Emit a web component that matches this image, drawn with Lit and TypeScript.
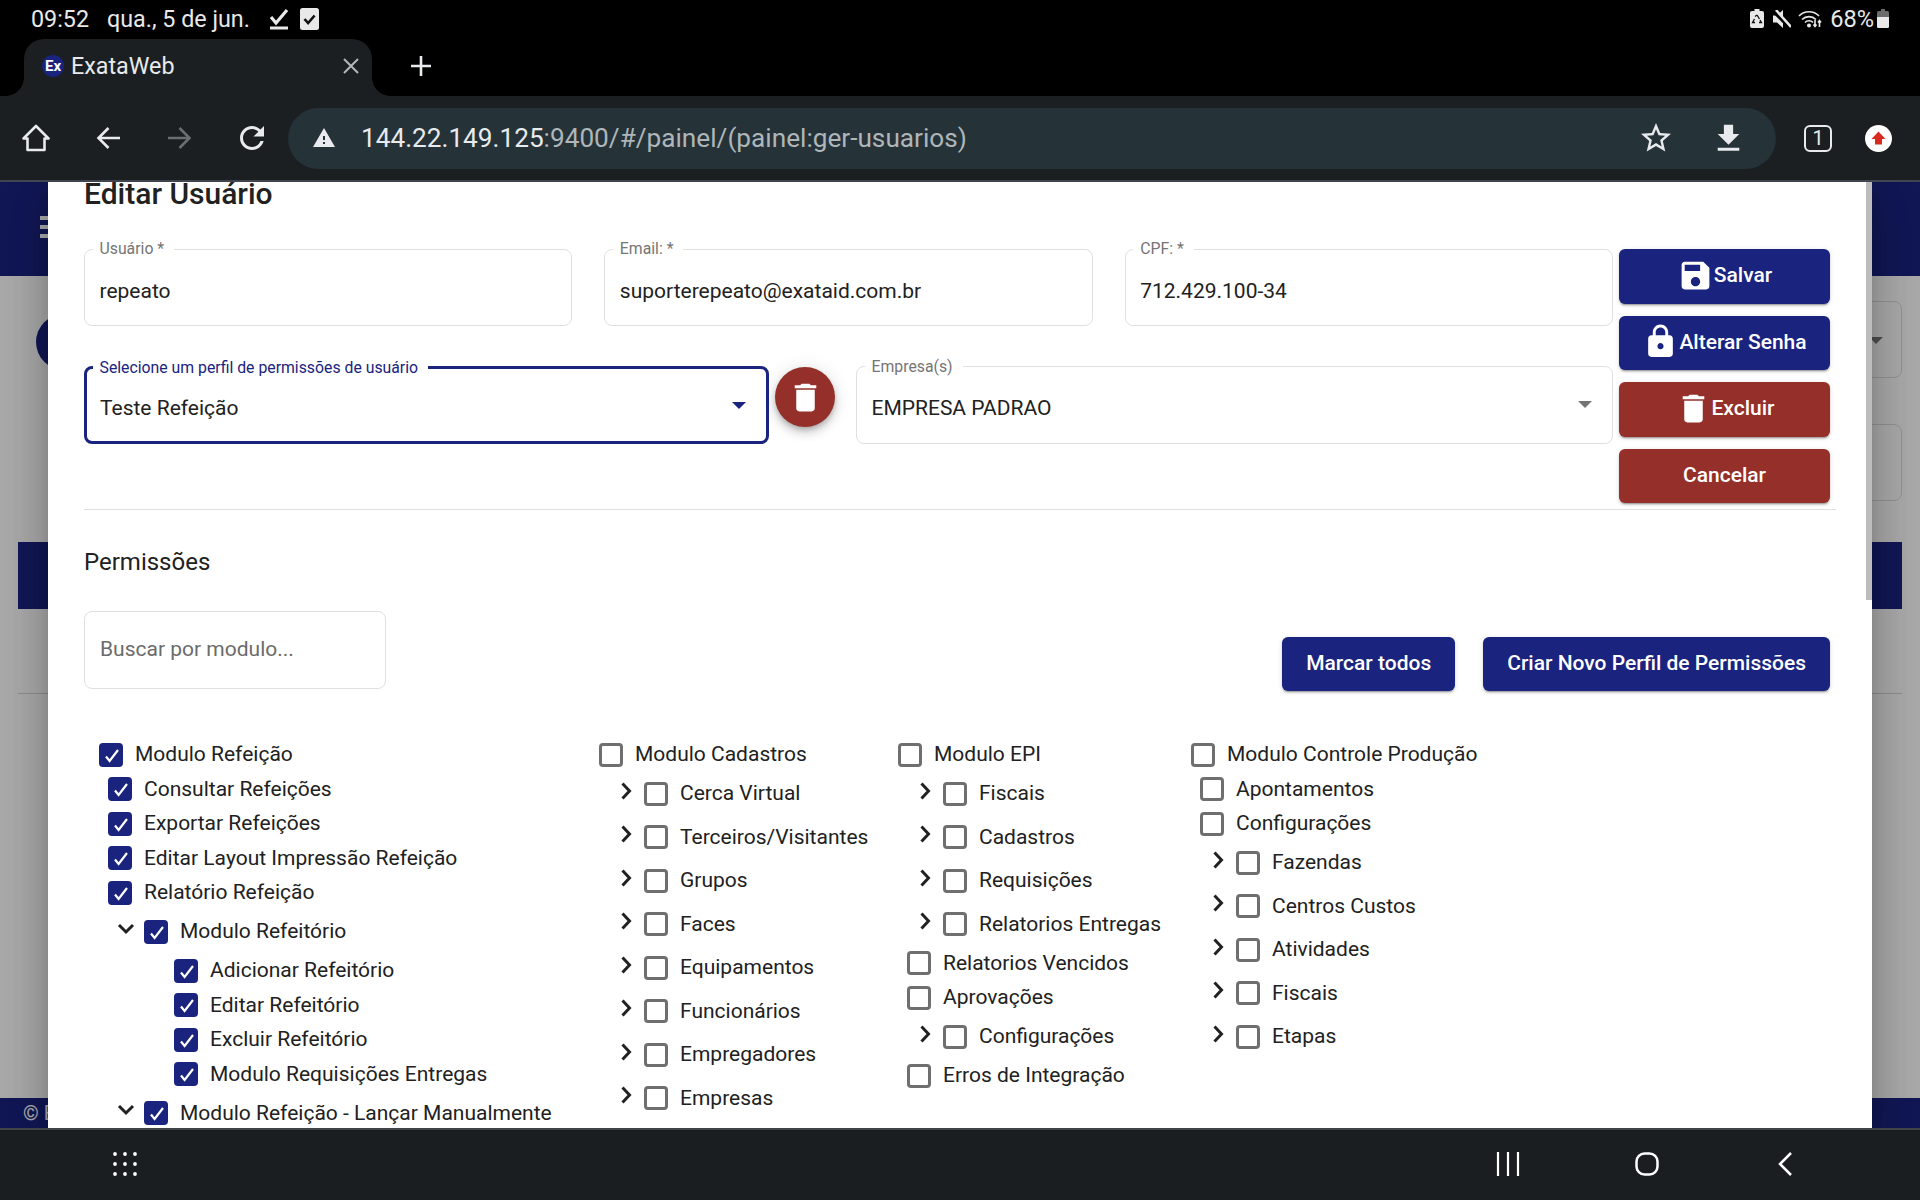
import { LitElement, html, css, svg, nothing } from 'lit';
import { customElement } from 'lit/decorators.js';

type Kind = 'root' | 'leaf' | 'exp' | 'open' | 'child';
type Item = [Kind, string];

const COLUMNS: { on: boolean; items: Item[] }[] = [
  {
    on: true,
    items: [
      ['root', 'Modulo Refeição'],
      ['leaf', 'Consultar Refeições'],
      ['leaf', 'Exportar Refeições'],
      ['leaf', 'Editar Layout Impressão Refeição'],
      ['leaf', 'Relatório Refeição'],
      ['open', 'Modulo Refeitório'],
      ['child', 'Adicionar Refeitório'],
      ['child', 'Editar Refeitório'],
      ['child', 'Excluir Refeitório'],
      ['child', 'Modulo Requisições Entregas'],
      ['open', 'Modulo Refeição - Lançar Manualmente'],
    ],
  },
  {
    on: false,
    items: [
      ['root', 'Modulo Cadastros'],
      ['exp', 'Cerca Virtual'],
      ['exp', 'Terceiros/Visitantes'],
      ['exp', 'Grupos'],
      ['exp', 'Faces'],
      ['exp', 'Equipamentos'],
      ['exp', 'Funcionários'],
      ['exp', 'Empregadores'],
      ['exp', 'Empresas'],
    ],
  },
  {
    on: false,
    items: [
      ['root', 'Modulo EPI'],
      ['exp', 'Fiscais'],
      ['exp', 'Cadastros'],
      ['exp', 'Requisições'],
      ['exp', 'Relatorios Entregas'],
      ['leaf', 'Relatorios Vencidos'],
      ['leaf', 'Aprovações'],
      ['exp', 'Configurações'],
      ['leaf', 'Erros de Integração'],
    ],
  },
  {
    on: false,
    items: [
      ['root', 'Modulo Controle Produção'],
      ['leaf', 'Apontamentos'],
      ['leaf', 'Configurações'],
      ['exp', 'Fazendas'],
      ['exp', 'Centros Custos'],
      ['exp', 'Atividades'],
      ['exp', 'Fiscais'],
      ['exp', 'Etapas'],
    ],
  },
];

const icon = (d: string, cls = 'mi') =>
  html`<svg class=${cls} viewBox="0 0 24 24" fill="currentColor"><path d=${d}></path></svg>`;

const SAVE = 'M17 3H5c-1.11 0-2 .9-2 2v14c0 1.1.89 2 2 2h14c1.1 0 2-.9 2-2V7l-4-4zm-5 16c-1.66 0-3-1.34-3-3s1.34-3 3-3 3 1.34 3 3-1.34 3-3 3zm3-10H5V5h10v4z';
const LOCK = 'M18 8h-1V6c0-2.76-2.24-5-5-5S7 3.24 7 6v2H6c-1.1 0-2 .9-2 2v10c0 1.1.9 2 2 2h12c1.1 0 2-.9 2-2V10c0-1.1-.9-2-2-2zm-6 9c-1.1 0-2-.9-2-2s.9-2 2-2 2 .9 2 2-.9 2-2 2zm3.1-9H8.9V6c0-1.71 1.39-3.1 3.1-3.1 1.71 0 3.1 1.39 3.1 3.1v2z';
const TRASH = 'M6 19c0 1.1.9 2 2 2h8c1.1 0 2-.9 2-2V7H6v12zM19 4h-3.5l-1-1h-5l-1 1H5v2h14V4z';
const STAR = 'M22 9.24l-7.19-.62L12 2 9.19 8.63 2 9.24l5.46 4.73L5.82 21 12 17.27 18.18 21l-1.63-7.03L22 9.24zM12 15.4l-3.76 2.27 1-4.28-3.32-2.88 4.38-.38L12 6.1l1.71 4.04 4.38.38-3.32 2.88 1 4.28L12 15.4z';
const DOWNLOAD = 'M19 9h-4V3H9v6H5l7 7 7-7zM5 18v2h14v-2H5z';
const RELOAD = 'M17.65 6.35C16.2 4.9 14.21 4 12 4c-4.42 0-7.99 3.58-7.99 8s3.57 8 7.99 8c3.73 0 6.84-2.55 7.73-6h-2.08c-.82 2.33-3.04 4-5.65 4-3.31 0-6-2.69-6-6s2.69-6 6-6c1.66 0 3.14.69 4.22 1.78L13 11h7V4l-2.35 2.35z';
const WARN = 'M1 21h22L12 2 1 21zm12-3h-2v-2h2v2zm0-4h-2v-4h2v4z';

@customElement('perm-tree')
export class PermTree extends LitElement {
  static styles = css`
    :host {
      display: grid;
      grid-template-columns: 500px 299px 293px 1fr;
      padding-left: 15px;
      margin-top: 46.25px;
      font-family: Roboto, sans-serif;
      font-size: 21px;
      color: #212121;
    }
    .row {
      display: flex;
      align-items: center;
      height: 34.5px;
      white-space: nowrap;
    }
    .row.tall {
      height: 43.5px;
    }
    .leaf {
      padding-left: 9px;
    }
    .child {
      padding-left: 75px;
    }
    .chev {
      width: 18px;
      height: 18px;
      margin: -6px 9px 0 18px;
      fill: none;
      stroke: #212121;
      stroke-width: 3;
      flex: none;
    }
    .cb {
      width: 24px;
      height: 24px;
      box-sizing: border-box;
      border: 3px solid #6f6f6f;
      border-radius: 4px;
      margin-right: 12px;
      flex: none;
    }
    .cb.on {
      background: #1a237e;
      border: none;
    }
    .cb svg {
      display: block;
      fill: none;
      stroke: #fff;
      stroke-width: 2.2;
    }
    .txt {
      margin-top: -1px;
    }
  `;

  private box(on: boolean) {
    return on
      ? html`<div class="cb on"><svg width="24" height="24" viewBox="0 0 24 24"><path d="M7 13.5l3.6 4.5L19 7"></path></svg></div>`
      : html`<div class="cb"></div>`;
  }

  private row(on: boolean, [kind, label]: Item) {
    const tall = kind === 'exp' || kind === 'open';
    return html`<div class="row ${kind} ${tall ? 'tall' : ''}">
      ${tall
        ? html`<svg class="chev" viewBox="0 0 18 18">
            ${kind === 'open'
              ? svg`<path d="M2 5l7 7 7-7"></path>`
              : svg`<path d="M5.5 1.5L12.5 9l-7 7.5"></path>`}
          </svg>`
        : nothing}
      ${this.box(on)}
      <span class="txt">${label}</span>
    </div>`;
  }

  render() {
    return COLUMNS.map((c) => html`<div>${c.items.map((i) => this.row(c.on, i))}</div>`);
  }
}

@customElement('app-root')
export class AppRoot extends LitElement {
  static styles = css`
    :host {
      display: flex;
      flex-direction: column;
      width: 1920px;
      height: 1200px;
      overflow: hidden;
      font-family: Roboto, sans-serif;
      background: #000;
    }
    /* status bar */
    .status {
      height: 39px;
      box-sizing: border-box;
      padding: 0 31px 2px;
      display: flex;
      align-items: center;
      color: #e9e9e9;
      font-size: 23.3px;
      flex: none;
    }
    .status .date {
      margin-left: 18px;
    }
    .status .s1 {
      margin-left: 19px;
    }
    .status .s2 {
      margin-left: 11px;
    }
    .status .spacer {
      flex: 1;
    }
    .status .pct {
      margin: 0 3px 0 8px;
      font-size: 23.6px;
    }
    .status .mute {
      margin-left: 9px;
    }
    .status .wifi {
      margin-left: 7px;
    }
    .status svg {
      display: block;
      flex: none;
    }
    /* tabs */
    .tabs {
      height: 57px;
      display: flex;
      align-items: center;
      padding-left: 24px;
      flex: none;
    }
    .tab {
      position: relative;
      width: 348px;
      height: 57px;
      box-sizing: border-box;
      background: #1b1f22;
      border-radius: 20px 20px 0 0;
      display: flex;
      align-items: center;
      padding: 0 13px 4px 18px;
      color: #e8eaed;
      font-size: 23.3px;
    }
    .tab::before,
    .tab::after {
      content: '';
      position: absolute;
      bottom: 0;
      width: 18px;
      height: 18px;
    }
    .tab::before {
      left: -18px;
      background: radial-gradient(circle at 0 0, transparent 17.5px, #1b1f22 18px);
    }
    .tab::after {
      right: -18px;
      background: radial-gradient(circle at 100% 0, transparent 17.5px, #1b1f22 18px);
    }
    .fav {
      width: 22px;
      height: 22px;
      border-radius: 50%;
      background: #1a237e;
      color: #fff;
      font-size: 15px;
      font-weight: 700;
      display: flex;
      align-items: center;
      justify-content: center;
      margin-right: 7px;
      flex: none;
    }
    .tab .name {
      flex: 1;
    }
    .plus {
      margin: -4px 0 0 39px;
    }
    /* toolbar */
    .toolbar {
      height: 86px;
      box-sizing: border-box;
      border-bottom: 2px solid #41454f;
      background: #1b1f22;
      display: flex;
      align-items: center;
      color: #e8eaed;
      flex: none;
    }
    .toolbar svg {
      display: block;
      flex: none;
    }
    .home {
      margin-left: 22px;
    }
    .back {
      margin-left: 46px;
    }
    .fwd {
      margin-left: 48px;
      color: #6a6e70;
    }
    .reload {
      margin-left: 42px;
    }
    .url {
      margin-left: 18px;
      width: 1488px;
      height: 61px;
      border-radius: 31px;
      background: #253238;
      display: flex;
      align-items: center;
      padding-left: 24px;
      box-sizing: border-box;
      font-size: 26.2px;
      color: #aeb6ba;
    }
    .url .host {
      color: #e8eaed;
    }
    .url .addr {
      margin-left: 25px;
      flex: 1;
    }
    .url .star {
      margin-right: 36px;
    }
    .url .dl {
      margin-right: 29px;
    }
    .count {
      margin-left: 28px;
      width: 28px;
      height: 27px;
      border: 2.5px solid #e8eaed;
      border-radius: 6px;
      box-sizing: border-box;
      font-size: 20px;
      display: flex;
      align-items: center;
      justify-content: center;
    }
    .avatar {
      margin-left: 33px;
    }
    /* page under the dialog */
    .view {
      flex: 1;
      position: relative;
      overflow: hidden;
      background: #fafafa;
      display: flex;
      flex-direction: column;
    }
    .topbar {
      height: 94px;
      background: #1a237e;
      padding-left: 40px;
      display: flex;
      align-items: center;
      flex: none;
    }
    .burger {
      width: 24px;
      height: 22px;
      margin-top: -4px;
      background: repeating-linear-gradient(#fff 0 4px, transparent 4px 9px);
    }
    .main {
      flex: 1;
      padding: 25px 18px 0;
    }
    .pagerow {
      display: flex;
      justify-content: space-between;
      align-items: center;
    }
    .round {
      width: 56px;
      height: 56px;
      border-radius: 50%;
      background: #1a237e;
      margin: 5px 0 0 18px;
    }
    .pagefield {
      width: 420px;
      height: 77px;
      box-sizing: border-box;
      border: 1px solid #d6d6d6;
      border-radius: 8px;
      position: relative;
    }
    .pagefield.second {
      margin: 46px 0 0 auto;
    }
    .pagefield i {
      position: absolute;
      right: 18px;
      top: 35px;
      border: 7px solid transparent;
      border-top-color: #757575;
      border-bottom: 0;
    }
    .band {
      height: 67px;
      margin-top: 41px;
      background: #1a237e;
    }
    .pageline {
      height: 1px;
      margin-top: 84px;
      background: #d0d0d0;
    }
    .footer {
      height: 30px;
      background: #1a237e;
      color: #fff;
      font-size: 20px;
      padding-left: 23px;
      display: flex;
      align-items: center;
      white-space: pre;
      flex: none;
    }
    .scrim {
      position: absolute;
      inset: 0;
      background: rgba(0, 0, 0, 0.32);
    }
    /* dialog */
    .dialog {
      position: absolute;
      left: 48px;
      right: 48px;
      top: 0;
      bottom: 0;
      background: #fff;
      overflow: hidden;
      box-sizing: border-box;
      padding: 0 36px;
      box-shadow: 0 11px 15px -7px rgba(0, 0, 0, 0.2), 0 24px 38px 3px rgba(0, 0, 0, 0.14),
        0 9px 46px 8px rgba(0, 0, 0, 0.12);
      color: #212121;
    }
    .thumb {
      position: absolute;
      right: 0;
      top: 0;
      width: 6px;
      height: 418px;
      background: #bdbdbd;
    }
    h2 {
      margin: 0 0 43px;
      font-size: 30px;
      line-height: 24px;
      font-weight: 500;
    }
    .form {
      display: grid;
      grid-template-columns: 1fr 211px;
      gap: 6px;
      padding-right: 6px;
    }
    .fields {
      display: flex;
      flex-direction: column;
      gap: 40px;
    }
    .line {
      display: flex;
      gap: 32px;
    }
    .field {
      position: relative;
      flex: 1;
      min-width: 0;
      height: 77px;
      box-sizing: border-box;
      border: 1.5px solid #e0e0e0;
      border-radius: 8px;
      display: flex;
      align-items: center;
      padding: 6px 14.5px 0;
      font-size: 21px;
    }
    .line.second .field {
      height: 78px;
    }
    .line.second .field label {
      top: -9px;
    }
    .field.focus {
      flex: none;
      width: 685px;
      border: 3px solid #1a237e;
      padding-left: 13px;
    }
    .field label {
      position: absolute;
      left: 7.5px;
      top: -10px;
      padding: 0 10px 0 7px;
      background: #fff;
      color: #757575;
      font-size: 15.8px;
      line-height: 18px;
      white-space: nowrap;
    }
    .line.second .field.focus label {
      left: 5.5px;
      top: -10.5px;
      color: #1a237e;
    }
    .field b {
      position: absolute;
      right: 20px;
      top: 34px;
      border: 7px solid transparent;
      border-top-color: #757575;
      border-bottom: 0;
    }
    .field.focus b {
      right: 20px;
      top: 33px;
      border-top-color: #1a237e;
    }
    .fab {
      width: 60px;
      height: 60px;
      margin: 1px -11px 0 -26px;
      border-radius: 50%;
      background: #952f2a;
      color: #fff;
      display: flex;
      align-items: center;
      justify-content: center;
      flex: none;
      box-shadow: 0 3px 5px -1px rgba(0, 0, 0, 0.2), 0 6px 10px 0 rgba(0, 0, 0, 0.14),
        0 1px 18px 0 rgba(0, 0, 0, 0.12);
    }
    .mi {
      width: 37px;
      height: 37px;
      flex: none;
    }
    .actions {
      display: flex;
      flex-direction: column;
      gap: 12px;
    }
    .btn {
      height: 54.5px;
      box-sizing: border-box;
      padding-bottom: 2px;
      border-radius: 6px;
      background: #1a237e;
      color: #fff;
      font-size: 21px;
      font-weight: 500;
      display: flex;
      align-items: center;
      justify-content: center;
      white-space: nowrap;
      box-shadow: 0 3px 1px -2px rgba(0, 0, 0, 0.2), 0 2px 2px 0 rgba(0, 0, 0, 0.14),
        0 1px 5px 0 rgba(0, 0, 0, 0.12);
    }
    .btn.red {
      background: #952f2a;
    }
    .btn.wide {
      padding: 0 24px 2px;
    }
    hr {
      border: 0;
      height: 1.5px;
      margin: 5.5px 0 0;
      background: #e0e0e0;
    }
    h3 {
      margin: 36.5px 0 0;
      font-size: 24px;
      line-height: 30px;
      font-weight: 400;
    }
    .tools {
      display: flex;
      align-items: flex-end;
      margin-top: 34.5px;
      padding-right: 6px;
      height: 80px;
      gap: 28px;
    }
    .search {
      flex: none;
      width: 302px;
      height: 78px;
      margin: 0 auto 2px 0;
      box-sizing: border-box;
      border: 1.5px solid #e0e0e0;
      border-radius: 8px;
      display: flex;
      align-items: center;
      padding: 0 15px 2px;
      font-size: 21px;
      color: #6b6b6b;
    }
    /* nav bar */
    .nav {
      height: 72px;
      background: #1a1e21;
      flex: none;
      display: flex;
      align-items: center;
      border-top: 2px solid #3f4449;
      box-sizing: border-box;
      padding-bottom: 2px;
      color: #fff;
    }
    .nav svg {
      display: block;
      flex: none;
    }
    .nav .apps {
      margin-left: 113px;
      margin-right: auto;
    }
    .nav .recents {
      margin-right: 115px;
    }
    .nav .homebtn {
      margin-right: 119px;
    }
    .nav .backbtn {
      margin-right: 128px;
    }
  `;

  private field(label: string, value: string, extra = '', arrow = false) {
    return html`<div class="field ${extra}">
      <label>${label}</label>${value}${arrow ? html`<b></b>` : nothing}
    </div>`;
  }

  render() {
    return html`
      <div class="status">
        <span>09:52</span><span class="date">qua., 5 de jun.</span>
        <svg class="s1" width="20" height="22" viewBox="0 0 20 22" fill="none" stroke="#e9e9e9">
          <path d="M2 9l5 6L18 2" stroke-width="3.2"></path>
          <path d="M1 20h18" stroke-width="3"></path>
        </svg>
        <svg class="s2" width="19" height="22" viewBox="0 0 19 22">
          <rect width="19" height="22" rx="2.5" fill="#e9e9e9"></rect>
          <path d="M4.5 11l3.6 4 6.5-7.5" fill="none" stroke="#111" stroke-width="2.6"></path>
        </svg>
        <div class="spacer"></div>
        <svg width="14" height="19" viewBox="0 0 14 19">
          <path d="M4.5 0h5v2H12a2 2 0 0 1 2 2v13a2 2 0 0 1-2 2H2a2 2 0 0 1-2-2V4a2 2 0 0 1 2-2h2.500z" fill="#e9e9e9"></path>
          <path d="M7 6l2.5 4M9 13.5h2.5L10 11M5 13.5H2.5L4.500 10M5 7.500L7 6" fill="none" stroke="#111" stroke-width="1.3"></path>
        </svg>
        <svg class="mute" width="18" height="18" viewBox="0 0 18 18" fill="#e9e9e9">
          <path d="M0 5.500h4L10 0v18l-6-5.500H0z"></path>
          <path d="M0 0l18 18" stroke="#000" stroke-width="4.500"></path>
          <path d="M3 0l15 17" stroke="#e9e9e9" stroke-width="2.500"></path>
        </svg>
        <svg class="wifi" width="24" height="18" viewBox="0 0 24 18" fill="none" stroke="#e9e9e9" stroke-width="1.600">
          <path d="M1 6a14 14 0 0 1 20 0"></path>
          <path d="M4 9.500a10 10 0 0 1 14 0"></path>
          <path d="M7 12.500a5.500 5.500 0 0 1 8 0"></path>
          <circle cx="11" cy="15.500" r="1.200" fill="#e9e9e9"></circle>
          <path d="M17 10v6M15.500 14.500l1.500 2 1.500-2M21.500 17v-6M20 12.500l1.500-2 1.500 2"></path>
        </svg>
        <span class="pct">68%</span>
        <svg width="12" height="19" viewBox="0 0 12 19">
          <path d="M4 0h4v2h2.500A1.500 1.500 0 0 1 12 3.500V8H0V3.500A1.500 1.500 0 0 1 1.500 2H4z" fill="#6b6b6b"></path>
          <path d="M0 8h12v9.500a1.500 1.500 0 0 1-1.500 1.500h-9A1.500 1.500 0 0 1 0 17.500z" fill="#e9e9e9"></path>
        </svg>
      </div>
      <div class="tabs">
        <div class="tab">
          <span class="fav">Ex</span>
          <span class="name">ExataWeb</span>
          <svg width="16" height="16" viewBox="0 0 16 16" stroke="#b4b6b8" stroke-width="2">
            <path d="M1 1l14 14M15 1L1 15"></path>
          </svg>
        </div>
        <svg class="plus" width="20" height="20" viewBox="0 0 20 20" stroke="#e8eaed" stroke-width="2.600">
          <path d="M10 0v20M0 10h20"></path>
        </svg>
      </div>
      <div class="toolbar">
        <svg class="home" width="28" height="28" viewBox="0 0 28 28" fill="none" stroke="currentColor" stroke-width="2.600" stroke-linejoin="round">
          <path d="M14 2L26.500 14.500H22.500V26H5.500V14.500H1.500z"></path>
        </svg>
        <svg class="back" width="24" height="24" viewBox="0 0 24 24" fill="none" stroke="currentColor" stroke-width="2.600">
          <path d="M24 12H3M12.500 2L2.500 12l10 10"></path>
        </svg>
        <svg class="fwd" width="24" height="24" viewBox="0 0 24 24" fill="none" stroke="currentColor" stroke-width="2.600">
          <path d="M0 12h21M11.500 2l10 10-10 10"></path>
        </svg>
        <svg class="reload" width="36" height="36" viewBox="0 0 24 24" fill="currentColor"><path d=${RELOAD}></path></svg>
        <div class="url">
          <svg width="24" height="24" viewBox="0 0 24 24" fill="#e8eaed"><path d=${WARN}></path></svg>
          <span class="addr"><span class="host">144.22.149.125</span>:9400/#/painel/(painel:ger-usuarios)</span>
          <svg class="star" width="36" height="36" viewBox="0 0 24 24" fill="#e8eaed"><path d=${STAR}></path></svg>
          <svg class="dl" width="37" height="37" viewBox="0 0 24 24" fill="#e8eaed"><path d=${DOWNLOAD}></path></svg>
        </div>
        <div class="count">1</div>
        <svg class="avatar" width="27" height="27" viewBox="0 0 27 27">
          <circle cx="13.500" cy="13.500" r="13.500" fill="#fff"></circle>
          <path d="M13.500 6.500l7 7.500h-3.500v5.500h-7V14h-3.500z" fill="#d92a20"></path>
        </svg>
      </div>
      <div class="view">
        <div class="topbar"><div class="burger"></div></div>
        <div class="main">
          <div class="pagerow">
            <div class="round"></div>
            <div class="pagefield"><i></i></div>
          </div>
          <div class="pagefield second"></div>
          <div class="band"></div>
          <div class="pageline"></div>
        </div>
        <div class="footer">© Exata</div>
        <div class="scrim"></div>
        <div class="dialog">
          <h2>Editar Usuário</h2>
          <div class="form">
            <div class="fields">
              <div class="line">
                ${this.field('Usuário *', 'repeato')}
                ${this.field('Email: *', 'suporterepeato@exataid.com.br')}
                ${this.field('CPF: *', '712.429.100-34')}
              </div>
              <div class="line second">
                ${this.field('Selecione um perfil de permissões de usuário', 'Teste Refeição', 'focus', true)}
                <div class="fab">${icon(TRASH)}</div>
                ${this.field('Empresa(s)', 'EMPRESA PADRAO', '', true)}
              </div>
            </div>
            <div class="actions">
              <div class="btn">${icon(SAVE)}Salvar</div>
              <div class="btn">${icon(LOCK)}Alterar Senha</div>
              <div class="btn red">${icon(TRASH)}Excluir</div>
              <div class="btn red">Cancelar</div>
            </div>
          </div>
          <hr />
          <h3>Permissões</h3>
          <div class="tools">
            <div class="search">Buscar por modulo...</div>
            <div class="btn wide">Marcar todos</div>
            <div class="btn wide">Criar Novo Perfil de Permissões</div>
          </div>
          <perm-tree></perm-tree>
          <div class="thumb"></div>
        </div>
      </div>
      <div class="nav">
        <svg class="apps" width="24" height="24" viewBox="0 0 24 24" fill="#fff">
          ${[2, 12, 22].flatMap((y) => [2, 12, 22].map((x) => svg`<circle cx=${x} cy=${y} r="1.900"></circle>`))}
        </svg>
        <svg class="recents" width="24" height="24" viewBox="0 0 24 24" stroke="#fff" stroke-width="2.200">
          <path d="M2 0v24M12 0v24M22 0v24"></path>
        </svg>
        <svg class="homebtn" width="24" height="24" viewBox="0 0 24 24" fill="none" stroke="#fff" stroke-width="2.500">
          <rect x="1.500" y="1.500" width="21" height="21" rx="8"></rect>
        </svg>
        <svg class="backbtn" width="14" height="24" viewBox="0 0 14 24" fill="none" stroke="#fff" stroke-width="2.500">
          <path d="M13 1L2 12l11 11"></path>
        </svg>
      </div>
    `;
  }
}
